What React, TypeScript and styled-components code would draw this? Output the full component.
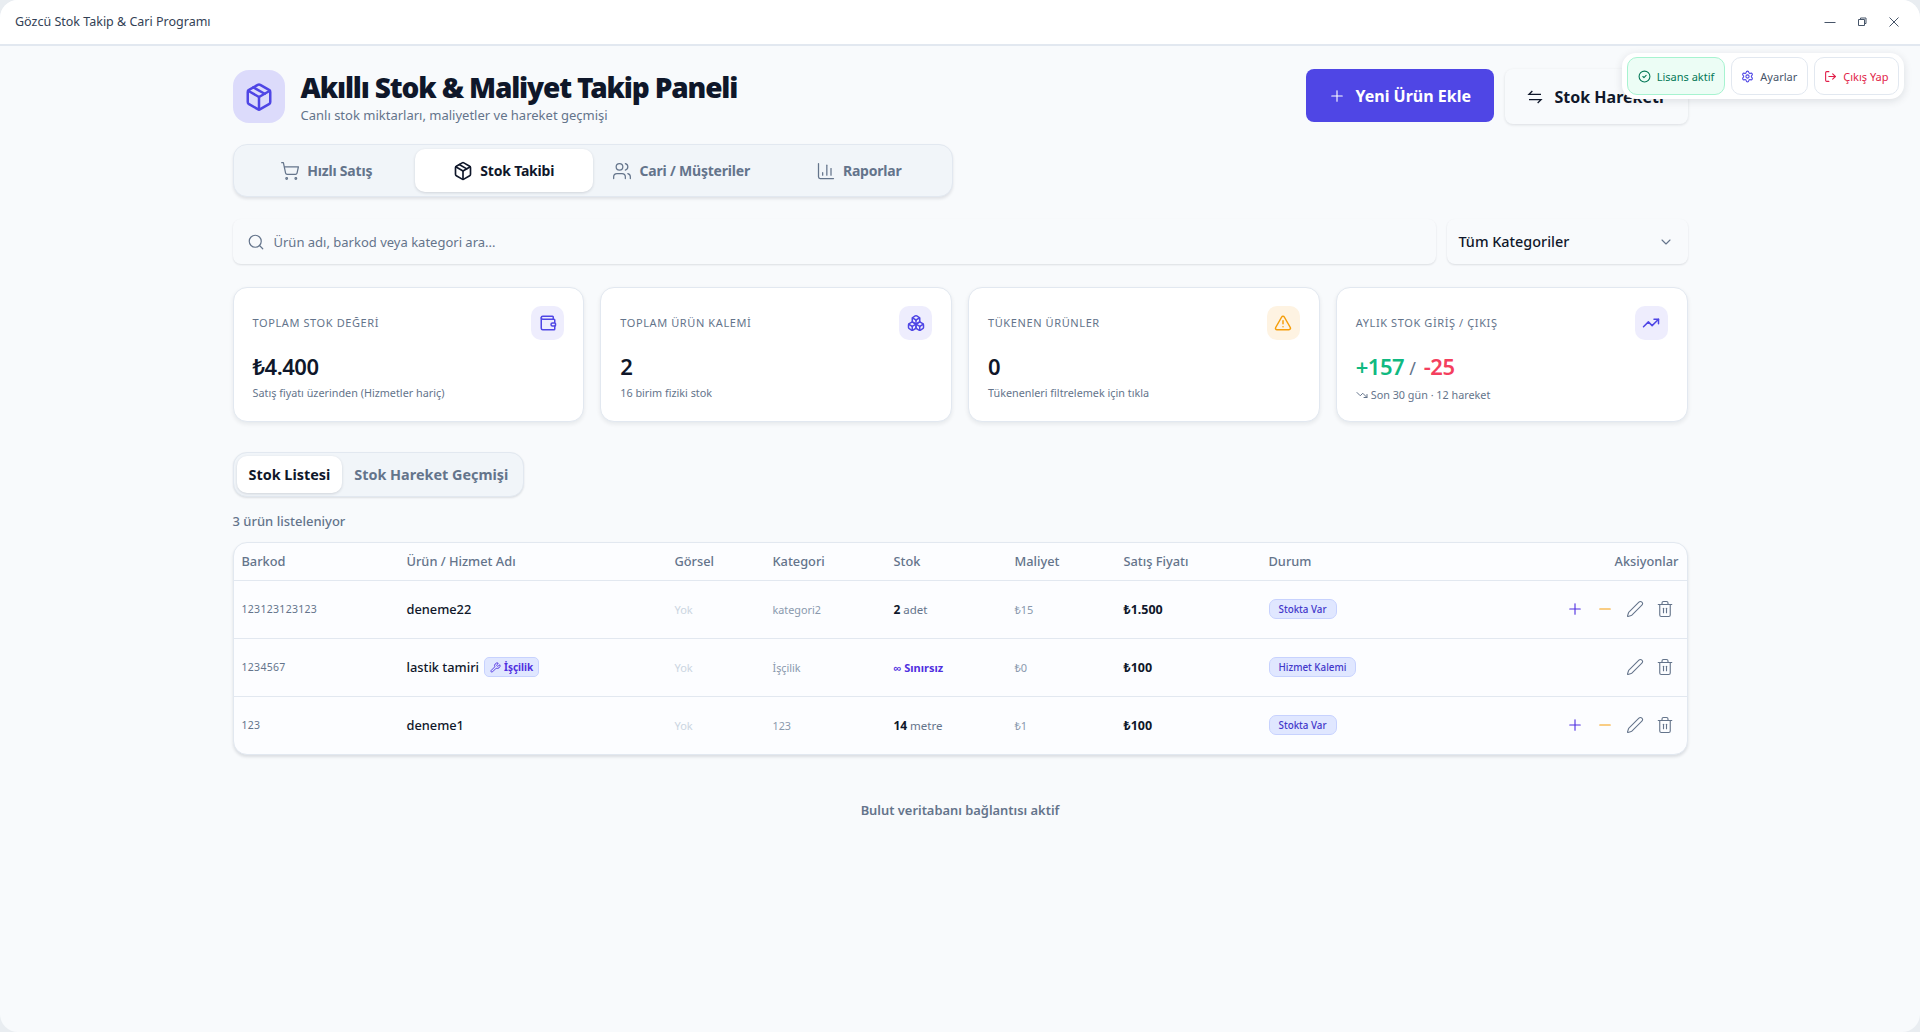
import styled, { createGlobalStyle } from 'styled-components';
import {
	Boxes,
	ChartColumn,
	ChevronDown,
	CircleCheck,
	LogOut,
	Minus,
	Package,
	Pen,
	Plus,
	Search,
	Settings,
	ShoppingCart,
	Trash2,
	TrendingDown,
	TrendingUp,
	TriangleAlert,
	Users,
	Wallet,
	Wrench,
} from 'lucide-react';

const GlobalStyle = createGlobalStyle`
	html, body, #root {
		margin: 0;
		height: 100%;
	}
	html {
		background: #e9edf1;
	}
	body {
		font-family: 'Noto Sans', 'Liberation Sans', sans-serif;
		color: #0f172a;
		overflow: hidden;
	}
	* {
		box-sizing: border-box;
	}
`;

const navTabs = [
	{ label: 'Hızlı Satış', icon: ShoppingCart },
	{ label: 'Stok Takibi', icon: Package, active: true },
	{ label: 'Cari / Müşteriler', icon: Users },
	{ label: 'Raporlar', icon: ChartColumn },
];

const rows = [
	{ barcode: '123123123123', name: 'deneme22', category: 'kategori2', stock: '2', unit: 'adet', cost: '₺15', price: '₺1.500', status: 'Stokta Var' },
	{ barcode: '1234567', name: 'lastik tamiri', service: true, category: 'İşçilik', cost: '₺0', price: '₺100', status: 'Hizmet Kalemi' },
	{ barcode: '123', name: 'deneme1', category: '123', stock: '14', unit: 'metre', cost: '₺1', price: '₺100', status: 'Stokta Var' },
];

export default function App() {
	return (
		<>
			<GlobalStyle />
			<Win>
				<TitleBar>
					<AppName>Gözcü Stok Takip &amp; Cari Programı</AppName>
					<WinControls>
						<WinIcon viewBox='0 0 12 12'>
							<path d='M0.5 6.5h11' />
						</WinIcon>
						<WinIcon viewBox='0 0 12 12'>
							<path d='M4.5 3.5V2h5.5v5.5H8.5M2.5 3.5h6v6h-6z' />
						</WinIcon>
						<WinIcon viewBox='0 0 12 12'>
							<path d='M1.5 1.5l9 9M10.5 1.5l-9 9' />
						</WinIcon>
					</WinControls>
				</TitleBar>

				<LicenseBar>
					<LicenseChip $tone='green'>
						<CircleCheck size={13} />
						Lisans aktif
					</LicenseChip>
					<LicenseChip $tone='gray'>
						<Settings size={13} color='#4f46e5' />
						Ayarlar
					</LicenseChip>
					<LicenseChip $tone='red'>
						<LogOut size={13} />
						Çıkış Yap
					</LicenseChip>
				</LicenseBar>

				<Main>
					<PageHeader>
						<Brand>
							<BrandIcon>
								<Package size={30} strokeWidth={2} />
							</BrandIcon>
							<div>
								<PageTitle>Akıllı Stok &amp; Maliyet Takip Paneli</PageTitle>
								<PageSub>Canlı stok miktarları, maliyetler ve hareket geçmişi</PageSub>
							</div>
						</Brand>
						<HeaderActions>
							<PrimaryButton>
								<Plus size={18} strokeWidth={1.5} />
								Yeni Ürün Ekle
							</PrimaryButton>
							<SecondaryButton>
								<SwapIcon viewBox='0 0 24 24'>
									<path d='M8 3 3 8h18M16 21l5-5H3' />
								</SwapIcon>
								Stok Hareketi
							</SecondaryButton>
						</HeaderActions>
					</PageHeader>

					<NavTabs>
						{navTabs.map(({ label, icon: Icon, active }) => (
							<NavTab key={label} $active={active}>
								<Icon size={20} strokeWidth={active ? 2 : 1.5} />
								{label}
							</NavTab>
						))}
					</NavTabs>

					<FilterRow>
						<SearchBox>
							<Search size={18} strokeWidth={1.6} color='#64748b' />
							Ürün adı, barkod veya kategori ara...
						</SearchBox>
						<SelectBox>
							Tüm Kategoriler
							<ChevronDown size={16} strokeWidth={1.6} color='#64748b' />
						</SelectBox>
					</FilterRow>

					<StatGrid>
						<StatCard>
							<StatTop>
								<StatLabel>TOPLAM STOK DEĞERİ</StatLabel>
								<StatIcon>
									<Wallet size={18} />
								</StatIcon>
							</StatTop>
							<StatValue>₺4.400</StatValue>
							<StatNote>Satış fiyatı üzerinden (Hizmetler hariç)</StatNote>
						</StatCard>
						<StatCard>
							<StatTop>
								<StatLabel>TOPLAM ÜRÜN KALEMİ</StatLabel>
								<StatIcon>
									<Boxes size={18} />
								</StatIcon>
							</StatTop>
							<StatValue>2</StatValue>
							<StatNote>16 birim fiziki stok</StatNote>
						</StatCard>
						<StatCard>
							<StatTop>
								<StatLabel>TÜKENEN ÜRÜNLER</StatLabel>
								<StatIcon $warn>
									<TriangleAlert size={18} />
								</StatIcon>
							</StatTop>
							<StatValue>0</StatValue>
							<StatNote>Tükenenleri filtrelemek için tıkla</StatNote>
						</StatCard>
						<StatCard>
							<StatTop>
								<StatLabel>AYLIK STOK GİRİŞ / ÇIKIŞ</StatLabel>
								<StatIcon>
									<TrendingUp size={18} />
								</StatIcon>
							</StatTop>
							<StatValue>
								<In>+157</In> <Slash>/</Slash> <Out>-25</Out>
							</StatValue>
							<StatNote>
								<TrendingDown size={12} /> Son 30 gün · 12 hareket
							</StatNote>
						</StatCard>
					</StatGrid>

					<SubTabs>
						<SubTab $active>Stok Listesi</SubTab>
						<SubTab>Stok Hareket Geçmişi</SubTab>
					</SubTabs>

					<ListCount>3 ürün listeleniyor</ListCount>

					<TableCard>
						<Table>
							<colgroup>
								<col style={{ width: 165 }} />
								<col style={{ width: 268 }} />
								<col style={{ width: 98 }} />
								<col style={{ width: 121 }} />
								<col style={{ width: 121 }} />
								<col style={{ width: 109 }} />
								<col style={{ width: 145 }} />
								<col style={{ width: 190 }} />
								<col />
							</colgroup>
							<thead>
								<tr>
									<Th>Barkod</Th>
									<Th>Ürün / Hizmet Adı</Th>
									<Th>Görsel</Th>
									<Th>Kategori</Th>
									<Th>Stok</Th>
									<Th>Maliyet</Th>
									<Th>Satış Fiyatı</Th>
									<Th>Durum</Th>
									<Th $right>Aksiyonlar</Th>
								</tr>
							</thead>
							<tbody>
								{rows.map((row) => (
									<tr key={row.barcode}>
										<BarcodeCell>{row.barcode}</BarcodeCell>
										<NameCell>
											<NameWrap>
												{row.name}
												{row.service && (
													<ServiceTag>
														<Wrench size={11} />
														İşçilik
													</ServiceTag>
												)}
											</NameWrap>
										</NameCell>
										<MutedCell>Yok</MutedCell>
										<CategoryCell>{row.category}</CategoryCell>
										<Td>
											{row.stock ? (
												<>
													<StockNum>{row.stock}</StockNum> <StockUnit>{row.unit}</StockUnit>
												</>
											) : (
												<Unlimited>∞ Sınırsız</Unlimited>
											)}
										</Td>
										<CostCell>{row.cost}</CostCell>
										<PriceCell>{row.price}</PriceCell>
										<Td>
											<StatusBadge>{row.status}</StatusBadge>
										</Td>
										<Td>
											<Actions>
												{!row.service && (
													<>
														<Plus size={18} strokeWidth={1.5} color='#4f2fe0' />
														<Minus size={18} strokeWidth={1.5} color='#f59e0b' />
													</>
												)}
												<Pen size={18} strokeWidth={1.4} color='#64748b' />
												<Trash2 size={18} strokeWidth={1.5} color='#64748b' />
											</Actions>
										</Td>
									</tr>
								))}
							</tbody>
						</Table>
					</TableCard>

					<FooterNote>Bulut veritabanı bağlantısı aktif</FooterNote>
				</Main>
			</Win>
		</>
	);
}

const Win = styled.div`
	position: relative;
	height: 100vh;
	background: #f8fafc;
	border-radius: 18px;
	overflow: hidden;
`;

const TitleBar = styled.div`
	display: flex;
	align-items: center;
	justify-content: space-between;
	height: 46px;
	padding: 0 20px 1px 15px;
	background: #fff;
	border-bottom: 2px solid #e2e8f0;
`;

const AppName = styled.div`
	font-size: 12.5px;
	color: #334155;
`;

const WinControls = styled.div`
	display: flex;
	align-items: center;
	gap: 20px;
`;

const WinIcon = styled.svg`
	width: 12px;
	height: 12px;
	fill: none;
	stroke: #475569;
	stroke-width: 1;
`;

const SwapIcon = styled.svg`
	flex: none;
	width: 16px;
	height: 16px;
	fill: none;
	stroke: currentColor;
	stroke-width: 2;
`;

const LicenseBar = styled.div`
	position: absolute;
	top: 53px;
	right: 16px;
	display: flex;
	gap: 6px;
	padding: 4px 5px;
	background: #fff;
	border-radius: 14px;
	box-shadow: 0 2px 8px rgba(15, 23, 42, 0.12);
`;

const chipTones = {
	green: { bg: '#ecfdf5', border: '#a7f3d0', color: '#047857' },
	gray: { bg: '#fff', border: '#e2e8f0', color: '#475569' },
	red: { bg: '#fff', border: '#e2e8f0', color: '#e11d48' },
};

const LicenseChip = styled.div<{ $tone: 'green' | 'gray' | 'red' }>`
	display: flex;
	align-items: center;
	gap: 6px;
	height: 38px;
	padding: 0 9.5px;
	font-size: 11px;
	border-radius: 10px;
	background: ${({ $tone }) => chipTones[$tone].bg};
	border: 1px solid ${({ $tone }) => chipTones[$tone].border};
	color: ${({ $tone }) => chipTones[$tone].color};
`;

const Main = styled.div`
	width: 1455px;
	margin: 0 auto;
	padding-top: 23px;
`;

const PageHeader = styled.div`
	display: flex;
	align-items: flex-start;
	justify-content: space-between;
`;

const Brand = styled.div`
	display: flex;
	align-items: center;
	gap: 16px;
`;

const BrandIcon = styled.div`
	display: flex;
	align-items: center;
	justify-content: center;
	width: 52px;
	height: 53px;
	border-radius: 16px;
	background: #dcdbfb;
	color: #4f46e5;
`;

const PageTitle = styled.h1`
	margin: 0;
	font-size: 28px;
	line-height: 36px;
	font-weight: 900;
	letter-spacing: -1.15px;
	color: #0f172a;
`;

const PageSub = styled.div`
	margin-top: 1px;
	font-size: 13px;
	line-height: 18px;
	color: #64748b;
`;

const HeaderActions = styled.div`
	display: flex;
	gap: 11px;
`;

const PrimaryButton = styled.button`
	display: flex;
	align-items: center;
	gap: 10px;
	width: 188px;
	height: 53px;
	padding: 1px 22px 0;
	border: 0;
	border-radius: 8px;
	background: #4f46e5;
	color: #fff;
	font: inherit;
	font-size: 16px;
	font-weight: 700;
`;

const SecondaryButton = styled(PrimaryButton)`
	gap: 12px;
	width: 183px;
	height: 55px;
	background: #f8fafc;
	color: #0f172a;
	box-shadow: 0 1px 3px rgba(15, 23, 42, 0.12);
`;

const NavTabs = styled.div`
	display: flex;
	width: 720px;
	height: 53px;
	margin-top: 20px;
	padding: 4px;
	background: #f1f5f9;
	border: 1px solid #e2e8f0;
	border-radius: 14px;
	box-shadow: 0 2px 3px rgba(15, 23, 42, 0.1);
`;

const NavTab = styled.div<{ $active?: boolean }>`
	display: flex;
	flex: 1;
	align-items: center;
	justify-content: center;
	gap: 7px;
	border-radius: 10px;
	font-size: 14px;
	font-weight: 700;
	letter-spacing: -0.2px;
	color: ${({ $active }) => ($active ? '#0f172a' : '#64748b')};
	background: ${({ $active }) => ($active ? '#fff' : 'transparent')};
	box-shadow: ${({ $active }) => ($active ? '0 1px 3px rgba(15, 23, 42, 0.15)' : 'none')};
`;

const FilterRow = styled.div`
	display: flex;
	gap: 11px;
	margin-top: 22px;
`;

const SearchBox = styled.div`
	display: flex;
	flex: 1;
	align-items: center;
	gap: 9px;
	height: 45px;
	padding: 0 14px;
	font-size: 13px;
	color: #64748b;
	background: #f8fafc;
	border-radius: 8px;
	box-shadow: 0 1px 2px rgba(15, 23, 42, 0.12);
`;

const SelectBox = styled.div`
	display: flex;
	align-items: center;
	justify-content: space-between;
	width: 241px;
	height: 45px;
	padding: 0 14px 0 12px;
	font-size: 14.4px;
	font-weight: 500;
	background: #f8fafc;
	border-radius: 8px;
	box-shadow: 0 1px 2px rgba(15, 23, 42, 0.12);
`;

const StatGrid = styled.div`
	display: grid;
	grid-template-columns: repeat(4, 1fr);
	gap: 16px;
	margin-top: 23px;
`;

const StatCard = styled.div`
	height: 135px;
	padding: 18px 19px 0;
	background: #fff;
	border: 1px solid #e2e8f0;
	border-radius: 14px;
	box-shadow: 0 2px 4px rgba(15, 23, 42, 0.08);
`;

const StatTop = styled.div`
	display: flex;
	align-items: center;
	justify-content: space-between;
`;

const StatLabel = styled.div`
	padding-bottom: 2px;
	font-size: 11px;
	letter-spacing: 0.6px;
	color: #64748b;
`;

const StatIcon = styled.div<{ $warn?: boolean }>`
	display: flex;
	align-items: center;
	justify-content: center;
	width: 33px;
	height: 34px;
	border-radius: 10px;
	background: ${({ $warn }) => ($warn ? '#fef3e2' : '#eeedfd')};
	color: ${({ $warn }) => ($warn ? '#f59e0b' : '#4f46e5')};
`;

const StatValue = styled.div`
	margin-top: 11px;
	font-size: 22px;
	line-height: 30px;
	font-weight: 600;
	letter-spacing: -0.5px;
	color: #0f172a;
`;

const In = styled.span`
	color: #10b981;
`;

const Out = styled.span`
	margin-left: 3px;
	color: #f43f5e;
`;

const Slash = styled.span`
	font-size: 18px;
	font-weight: 400;
	color: #64748b;
`;

const StatNote = styled.div`
	display: flex;
	align-items: center;
	gap: 3px;
	height: 15px;
	margin-top: 4px;
	font-size: 10.8px;
	color: #64748b;
`;

const SubTabs = styled.div`
	display: inline-flex;
	vertical-align: top;
	height: 45px;
	margin-top: 30px;
	padding: 3px;
	background: #f1f5f9;
	border: 1px solid #e2e8f0;
	border-radius: 14px;
	box-shadow: 0 1px 2px rgba(15, 23, 42, 0.12);
`;

const SubTab = styled.div<{ $active?: boolean }>`
	display: flex;
	align-items: center;
	padding: 0 12px;
	border-radius: 10px;
	font-size: 14.4px;
	font-weight: 700;
	color: ${({ $active }) => ($active ? '#0f172a' : '#64748b')};
	background: ${({ $active }) => ($active ? '#fff' : 'transparent')};
	box-shadow: ${({ $active }) => ($active ? '0 1px 3px rgba(15, 23, 42, 0.15)' : 'none')};
`;

const ListCount = styled.div`
	margin-top: 15px;
	font-size: 13px;
	font-weight: 500;
	line-height: 18px;
	color: #64748b;
`;

const TableCard = styled.div`
	margin-top: 12px;
	background: #fcfdff;
	border: 1px solid #e2e8f0;
	border-radius: 14px;
	box-shadow: 0 2px 3px rgba(15, 23, 42, 0.12);
	overflow: hidden;
`;

const Table = styled.table`
	width: 100%;
	border-collapse: collapse;
	table-layout: fixed;
`;

const Th = styled.th<{ $right?: boolean }>`
	height: 37px;
	padding: 0 8px;
	font-size: 12.8px;
	font-weight: 500;
	color: #64748b;
	text-align: ${({ $right }) => ($right ? 'right' : 'left')};
	border-bottom: 1px solid #e2e8f0;
`;

const Td = styled.td`
	height: 58px;
	padding: 0 8px;
	font-size: 11px;
	border-bottom: 1px solid #e2e8f0;

	tr:last-child > & {
		border-bottom: 0;
	}
`;

const BarcodeCell = styled(Td)`
	font-size: 10.5px;
	letter-spacing: 0.3px;
	color: #64748b;
`;

const NameCell = styled(Td)`
	font-size: 12.8px;
	font-weight: 500;
	color: #0f172a;
`;

const NameWrap = styled.div`
	display: flex;
	align-items: center;
	gap: 5px;
`;

const ServiceTag = styled.span`
	display: inline-flex;
	align-items: center;
	gap: 3px;
	height: 20px;
	padding: 0 5px;
	font-size: 10px;
	font-weight: 700;
	color: #4f2fe0;
	background: #e0e7ff;
	border: 1px solid #c7d2fe;
	border-radius: 5px;
`;

const MutedCell = styled(Td)`
	color: #cbd5e1;
`;

const CategoryCell = styled(Td)`
	font-size: 10.8px;
	color: #8a99ad;
`;

const StockNum = styled.span`
	font-size: 12px;
	font-weight: 700;
	color: #0f172a;
`;

const StockUnit = styled.span`
	font-size: 11.5px;
	color: #64748b;
`;

const Unlimited = styled.span`
	font-size: 11px;
	font-weight: 700;
	color: #4f2fe0;
`;

const CostCell = styled(Td)`
	color: #8a99ad;
`;

const PriceCell = styled(Td)`
	font-size: 12.5px;
	font-weight: 700;
	color: #0f172a;
`;

const StatusBadge = styled.span`
	display: inline-flex;
	align-items: center;
	height: 20px;
	padding: 0 9px;
	font-size: 9.8px;
	font-weight: 500;
	color: #4338ca;
	background: #e0e7ff;
	border: 1px solid #c7d2fe;
	border-radius: 7px;
`;

const Actions = styled.div`
	display: flex;
	justify-content: flex-end;
	gap: 12px;
	padding-right: 5px;
`;

const FooterNote = styled.div`
	margin-top: 46px;
	font-size: 12.9px;
	font-weight: 600;
	text-align: center;
	color: #64748b;
`;
